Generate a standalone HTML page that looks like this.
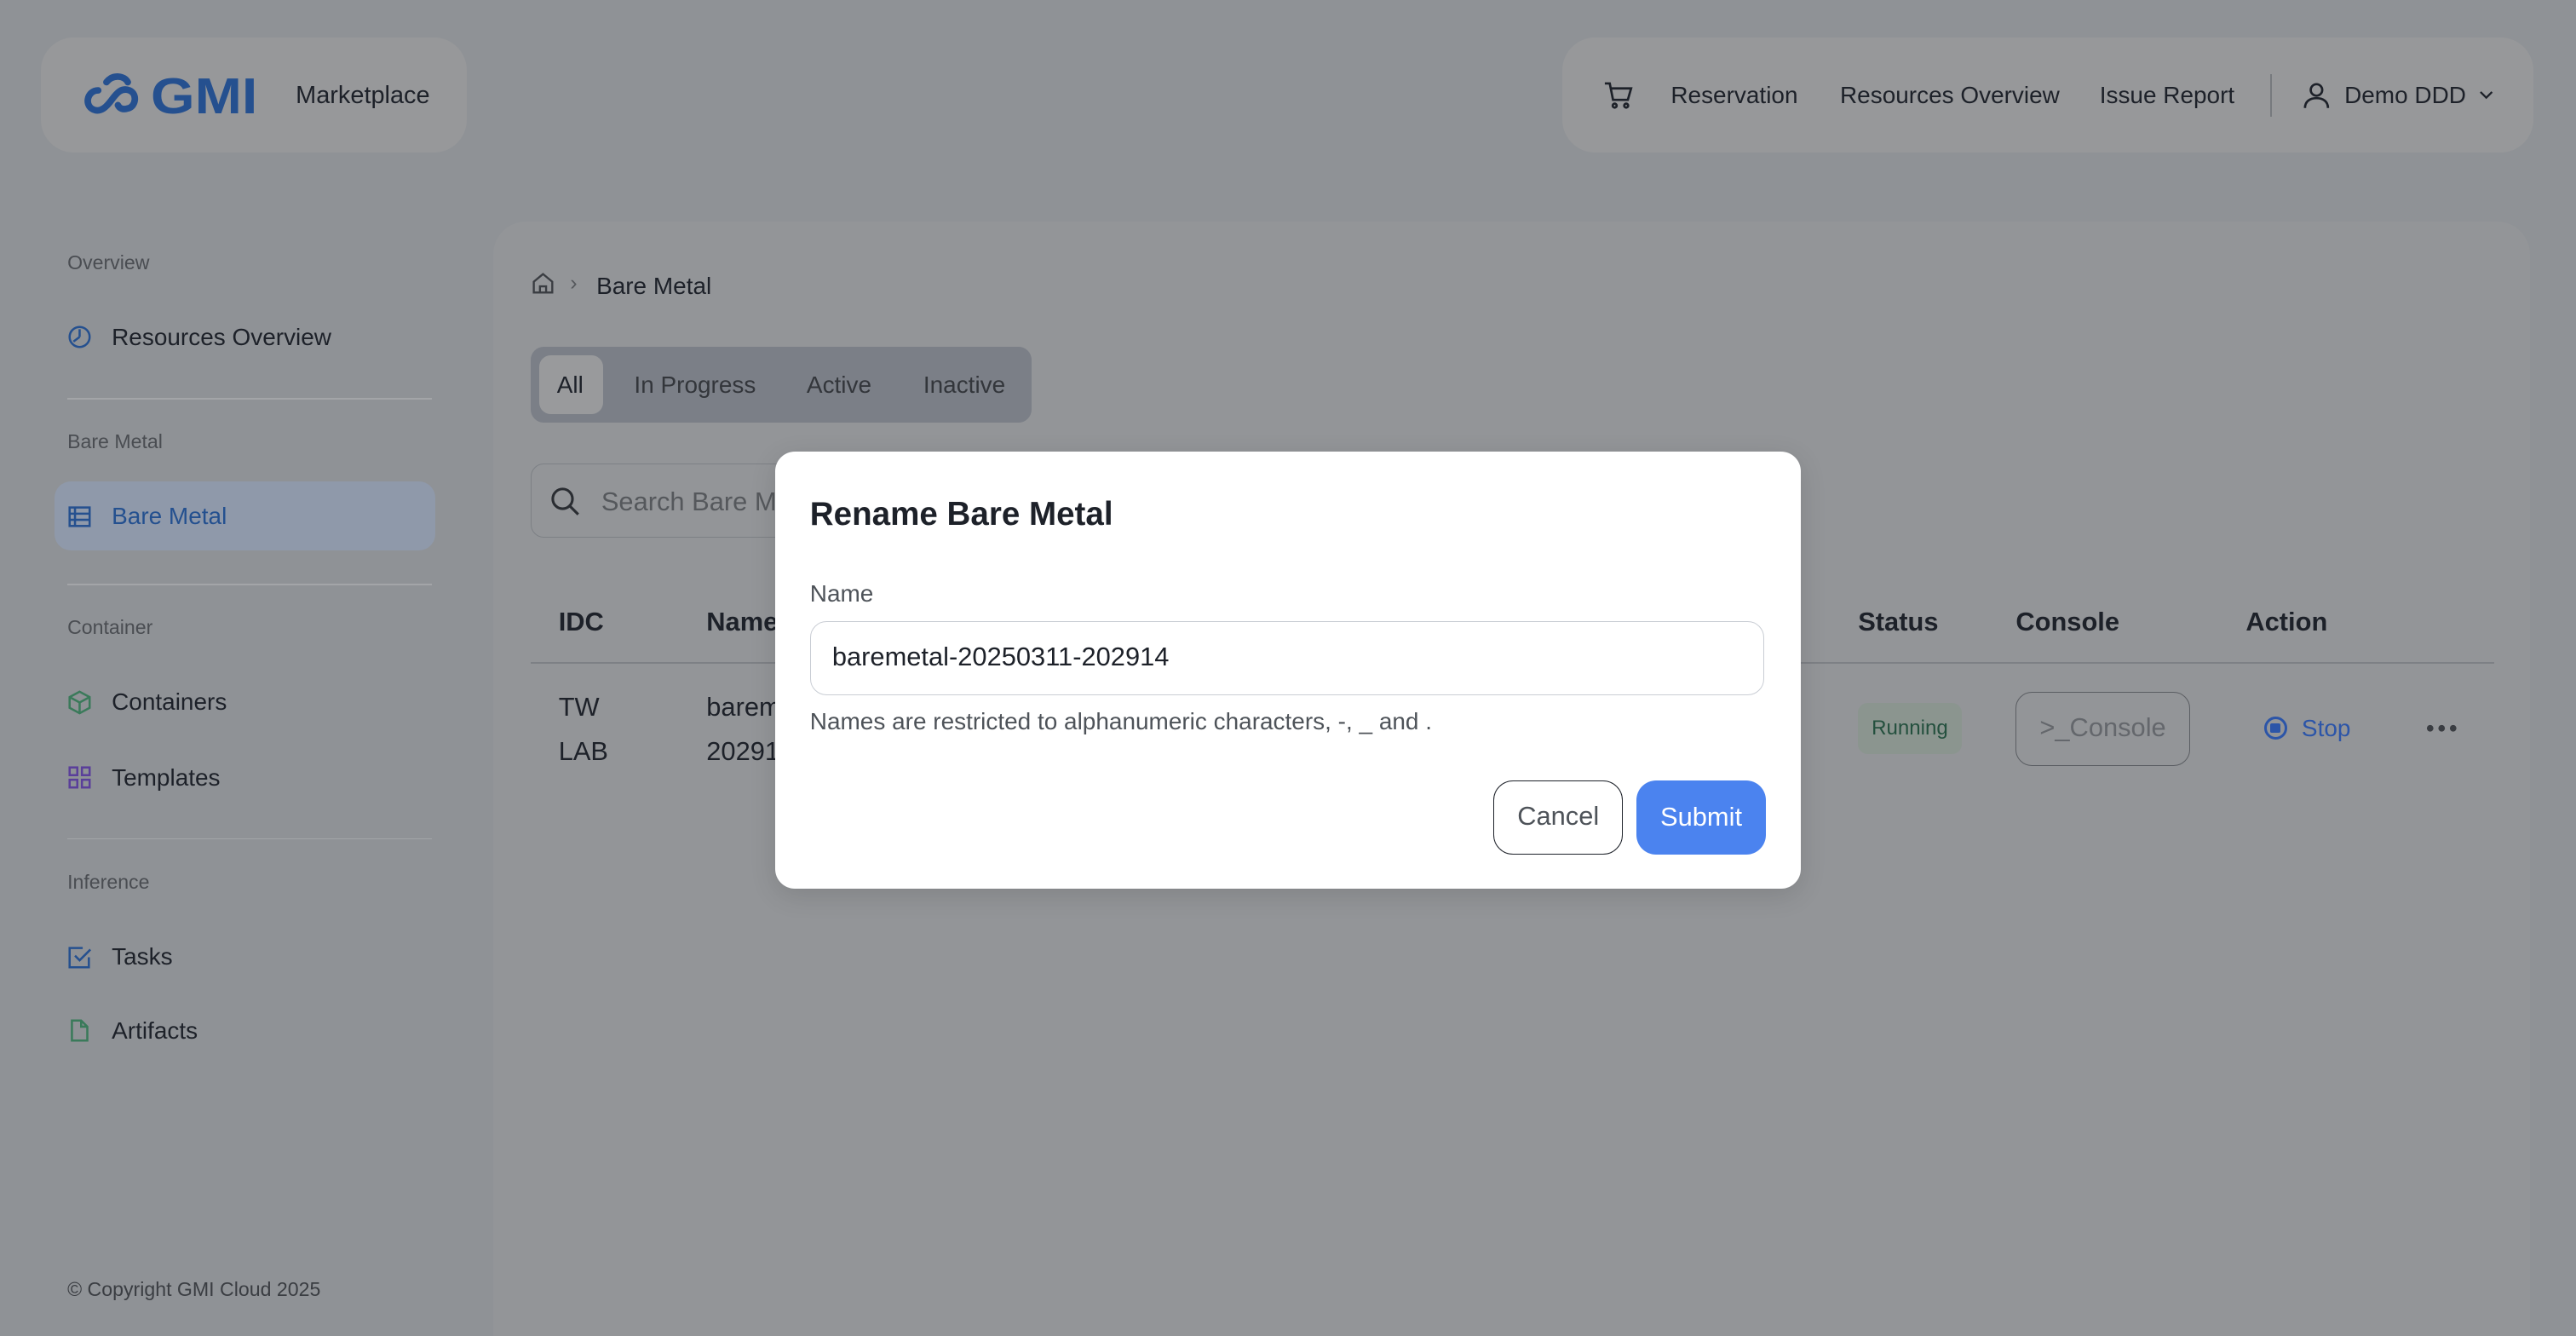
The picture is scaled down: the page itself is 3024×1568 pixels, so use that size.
<!DOCTYPE html>
<html><head><meta charset="utf-8"><style>
*{box-sizing:border-box;margin:0;padding:0}
html,body{width:3024px;height:1568px;overflow:hidden;background:#8e9195}
#r{width:1568px;height:813px;zoom:1.928571;position:relative;font-family:"Liberation Sans",sans-serif;color:#1d2129;background:#8f9296}
.a{position:absolute}
.card{background:#97989a;border-radius:20px}
.sb{font-size:12px;color:#4a4d52}
.it{font-size:14.5px;display:flex;align-items:center;gap:12px}
.ic{width:15px;height:15px;display:inline-block}
.hr{height:1px;background:#a3a5a8;left:41px;width:222px}
</style></head><body><div id="r">
<div class="a card" style="left:25px;top:23px;width:259px;height:70px"></div>
<svg class="a" style="left:50px;top:42px" width="112" height="32" viewBox="0 0 112 32">
<path d="M15 8c4-5 11-4 13 0M10 13c-7 0-9 10-2 12 4 1 7-2 10-6s6-8 11-6c5 2 4 10-1 11-3 1-5 0-6-2" fill="none" stroke="#25508f" stroke-width="4" stroke-linecap="round"/>
<text x="42" y="27" font-family="Liberation Sans" font-weight="700" font-size="31" fill="#25508f" textLength="65" lengthAdjust="spacingAndGlyphs">GMI</text></svg>
<div class="a" style="left:180px;top:50px;font-size:15px">Marketplace</div>
<div class="a card" style="left:951px;top:23px;width:591px;height:70px"></div>
<svg class="a" style="left:976px;top:50px" width="18" height="17" viewBox="0 0 18 17" fill="none" stroke="#1d2129" stroke-width="1.4"><path d="M1 1h3l2 10h9l2-7H5"/><circle cx="7" cy="14.5" r="1.2"/><circle cx="14" cy="14.5" r="1.2"/></svg>
<div class="a" style="left:1017px;top:50px;font-size:14.5px">Reservation</div>
<div class="a" style="left:1120px;top:50px;font-size:14.5px">Resources Overview</div>
<div class="a" style="left:1278px;top:50px;font-size:14.5px">Issue Report</div>
<div class="a" style="left:1382px;top:45px;width:1px;height:26px;background:#777a7e"></div>
<svg class="a" style="left:1401px;top:49px" width="18" height="18" viewBox="0 0 18 18" fill="none" stroke="#1d2129" stroke-width="1.4"><circle cx="9" cy="6" r="3.5"/><path d="M2 17c0-4 3-6 7-6s7 2 7 6"/></svg>
<div class="a" style="left:1427px;top:50px;font-size:14.5px">Demo DDD</div>
<svg class="a" style="left:1509px;top:55px" width="9" height="6" viewBox="0 0 9 6" fill="none" stroke="#1d2129" stroke-width="1.2"><path d="M1 1l3.5 3.5L8 1"/></svg>

<div class="a sb" style="left:41px;top:153px">Overview</div>
<div class="a it" style="left:41px;top:197px"><svg class="ic" viewBox="0 0 16 16" fill="none" stroke="#25508f" stroke-width="1.4"><circle cx="8" cy="8" r="6.5"/><path d="M8 8V3M8 8l-4 3"/></svg>Resources Overview</div>
<div class="a hr" style="top:242px"></div>
<div class="a sb" style="left:41px;top:262px">Bare Metal</div>
<div class="a" style="left:33px;top:293px;width:232px;height:42px;border-radius:10px;background:#8f99aa"></div>
<div class="a it" style="left:41px;top:306px;color:#24508f"><svg class="ic" viewBox="0 0 16 16" fill="none" stroke="#25508f" stroke-width="1.4"><rect x="1.5" y="2" width="13" height="12"/><path d="M1.5 6h13M1.5 10h13M5 2v12"/></svg>Bare Metal</div>
<div class="a hr" style="top:355px"></div>
<div class="a sb" style="left:41px;top:375px">Container</div>
<div class="a it" style="left:41px;top:419px"><svg class="ic" viewBox="0 0 16 16" fill="none" stroke="#3a7a5a" stroke-width="1.4"><path d="M8 1l6.5 3.5v7L8 15l-6.5-3.5v-7zM1.5 4.5L8 8l6.5-3.5M8 8v7"/></svg>Containers</div>
<div class="a it" style="left:41px;top:465px"><svg class="ic" viewBox="0 0 16 16" fill="none" stroke="#5a3f9a" stroke-width="1.4"><rect x="1.5" y="1.5" width="5" height="5"/><rect x="9.5" y="1.5" width="5" height="5"/><rect x="1.5" y="9.5" width="5" height="5"/><rect x="9.5" y="9.5" width="5" height="5"/></svg>Templates</div>
<div class="a hr" style="top:510px"></div>
<div class="a sb" style="left:41px;top:530px">Inference</div>
<div class="a it" style="left:41px;top:574px"><svg class="ic" viewBox="0 0 16 16" fill="none" stroke="#25508f" stroke-width="1.4"><path d="M14 8v6.5H1.5V2H10M5 7l3 3 7-7"/></svg>Tasks</div>
<div class="a it" style="left:41px;top:619px"><svg class="ic" viewBox="0 0 16 16" fill="none" stroke="#3a7a5a" stroke-width="1.4"><path d="M3 1.5h6l4 4v9H3zM9 1.5v4h4"/></svg>Artifacts</div>
<div class="a" style="left:41px;top:778px;font-size:12px;color:#3a3d42">© Copyright GMI Cloud 2025</div>

<div class="a" style="left:300px;top:135px;width:1240px;height:678px;background:#939598;border-radius:20px 20px 0 0"></div>
<svg class="a" style="left:323px;top:165px" width="15" height="15" viewBox="0 0 16 16" fill="none" stroke="#3a3d42" stroke-width="1.3"><path d="M2 7l6-5 6 5v7H2zM6 14v-4h4v4"/></svg>
<div class="a" style="left:347px;top:165px;font-size:13px;color:#55585c">&#8250;</div>
<div class="a" style="left:363px;top:166px;font-size:14.5px">Bare Metal</div>
<div class="a" style="left:323px;top:211px;width:305px;height:46px;border-radius:8px;background:#7b7f87"></div>
<div class="a" style="left:328px;top:216px;width:39px;height:36px;border-radius:7px;background:#999a9c"></div>
<div class="a" style="left:339px;top:226px;font-size:14.5px">All</div>
<div class="a" style="left:386px;top:226px;font-size:14.5px;color:#33363b">In Progress</div>
<div class="a" style="left:491px;top:226px;font-size:14.5px;color:#33363b">Active</div>
<div class="a" style="left:562px;top:226px;font-size:14.5px;color:#33363b">Inactive</div>
<div class="a" style="left:323px;top:282px;width:200px;height:45px;border:1px solid #7d8085;border-radius:8px"></div>
<svg class="a" style="left:335px;top:296px" width="18" height="18" viewBox="0 0 18 18" fill="none" stroke="#2a2d32" stroke-width="1.6"><circle cx="7.5" cy="7.5" r="6"/><path d="M12 12l5 5"/></svg>
<div class="a" style="left:366px;top:296px;font-size:16px;color:#55585c">Search Bare M</div>
<div class="a" style="left:323px;top:403px;width:1195px;height:1px;background:#7d8085"></div>
<div class="a" style="left:340px;top:369px;font-size:16px;font-weight:700">IDC</div>
<div class="a" style="left:430px;top:369px;font-size:16px;font-weight:700">Name</div>
<div class="a" style="left:1131px;top:369px;font-size:16px;font-weight:700">Status</div>
<div class="a" style="left:1227px;top:369px;font-size:16px;font-weight:700">Console</div>
<div class="a" style="left:1367px;top:369px;font-size:16px;font-weight:700">Action</div>
<div class="a" style="left:340px;top:417px;font-size:16px;line-height:27px">TW<br>LAB</div>
<div class="a" style="left:430px;top:417px;font-size:16px;line-height:27px">barem<br>20291</div>
<div class="a" style="left:1131px;top:428px;width:63px;height:31px;border-radius:6px;background:#8b958f;font-size:12.5px;color:#24503e;text-align:center;line-height:31px">Running</div>
<div class="a" style="left:1227px;top:421px;width:106px;height:45px;border:1px solid #5b5e63;border-radius:10px;font-size:16px;color:#64676c;text-align:center;line-height:43px">&gt;_Console</div>
<div class="a" style="left:1378px;top:436px;width:14px;height:14px;border:1.6px solid #2c55a8;border-radius:50%"></div>
<div class="a" style="left:1382px;top:440px;width:6px;height:6px;background:#2c55a8;border-radius:1px"></div>
<div class="a" style="left:1401px;top:435px;font-size:14.5px;color:#2c55a8">Stop</div>
<svg class="a" style="left:1476px;top:440px" width="20" height="6" viewBox="0 0 20 6" fill="#3a3d42"><circle cx="3" cy="3" r="2"/><circle cx="10" cy="3" r="2"/><circle cx="17" cy="3" r="2"/></svg>

<div class="a" style="left:472px;top:275px;width:624px;height:266px;background:#fff;border-radius:12px;box-shadow:0 4px 16px rgba(0,0,0,.12)"></div>
<div class="a" style="left:493px;top:302px;font-size:20px;font-weight:700;color:#1d2129">Rename Bare Metal</div>
<div class="a" style="left:493px;top:353px;font-size:14.5px;color:#4e5359">Name</div>
<div class="a" style="left:493px;top:378px;width:581px;height:45px;border:1px solid #c9cdd4;border-radius:10px;font-size:16px;padding-left:13px;line-height:43px">baremetal-20250311-202914</div>
<div class="a" style="left:493px;top:431px;font-size:14.5px;color:#4e5359">Names are restricted to alphanumeric characters, -, _ and .</div>
<div class="a" style="left:909px;top:475px;width:79px;height:45px;border:1px solid #1d2129;border-radius:12px;font-size:16px;color:#4e5359;text-align:center;line-height:43px">Cancel</div>
<div class="a" style="left:996px;top:475px;width:79px;height:45px;background:#4b83ef;border-radius:12px;font-size:16px;color:#fff;text-align:center;line-height:45px">Submit</div>
</div></body></html>
